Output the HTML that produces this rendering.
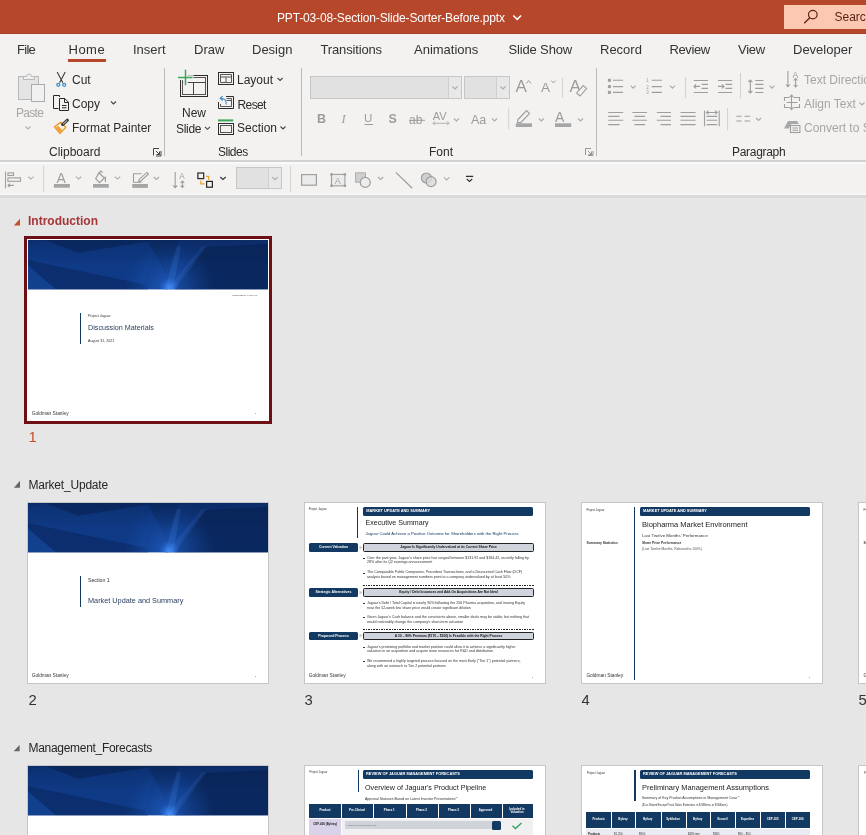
<!DOCTYPE html>
<html><head><meta charset="utf-8">
<style>
*{margin:0;padding:0;box-sizing:border-box}
html,body{width:866px;height:835px;overflow:hidden;background:#e6e6e6;font-family:"Liberation Sans",sans-serif;position:relative}
.a{position:absolute}
.t{position:absolute;white-space:nowrap;line-height:1}
#title{left:0;top:0;width:866px;height:34px;background:#b7472a}
#tabs{left:0;top:34px;width:866px;height:30px;background:#f3f2f1}
#ribbon{left:0;top:64px;width:866px;height:97px;background:#f3f2f1}
#qat{left:0;top:161px;width:866px;height:36px;background:#f3f2f1}
.tab{font-size:13px;color:#333;top:43px}
.rl{font-size:12px;color:#2b2b2b}
.dis{color:#a6a6a6}
.sep{position:absolute;width:1px;background:#bababa}
.thumb{position:absolute;width:242px;height:182px;background:#fff;border:1px solid #c6c6c6;overflow:hidden}
.sl{position:absolute;width:240px;height:180px;background:#fff;overflow:hidden}
.hb{position:absolute;height:8.5px;background:#113961;border-radius:1.5px;color:#fff;font-size:3.9px;font-weight:bold;line-height:8.5px;padding-left:3px;white-space:nowrap}
.lb{position:absolute;left:4.3px;width:48.4px;height:8.3px;margin-top:-0.3px;background:#113961;border-radius:1.5px;color:#fff;font-size:3.5px;font-weight:bold;line-height:8.3px;text-align:center;white-space:nowrap}
.gb{position:absolute;left:58.3px;width:170.5px;height:8.3px;margin-top:-0.3px;background:#d0d5dd;border:0.9px solid #222;border-radius:1.5px;color:#111;font-size:3.3px;font-weight:bold;line-height:6.5px;text-align:center;white-space:nowrap}
.bl{position:absolute;left:57.5px;font-size:3.6px;line-height:4.8px;color:#333;white-space:nowrap;padding-left:4.5px}
.bl:before{content:"";position:absolute;left:0.3px;top:2.3px;width:2.4px;height:0.8px;background:#333}
.dv{position:absolute;left:58px;width:171px;height:1px;background:repeating-linear-gradient(90deg,#222 0,#222 1.7px,transparent 1.7px,transparent 2.6px)}
.th{background:#113961}
.tt{font-size:2.9px;font-weight:bold;color:#fff;text-align:center}
</style></head><body><div style="position:absolute;left:0;top:0;width:866px;height:835px;will-change:transform">
<div id="title" class="a"></div>
<div class="a" style="left:0;top:33px;width:866px;height:1px;background:#a4401f"></div>
<div class="t" style="left:277px;top:12px;font-size:12px;letter-spacing:-0.15px;color:#fff">PPT-03-08-Section-Slide-Sorter-Before.pptx</div>

<div class="a" style="left:784px;top:5px;width:82px;height:24px;background:#fdc8b2"></div>
<div class="t" style="left:834.5px;top:11.4px;font-size:12px;color:#5a2418">Search</div>
<svg class="a" style="left:0;top:0" width="866" height="34"><path d="M513.3,15.5 L517.2,19.4 L521.1,15.5" fill="none" stroke="#fff" stroke-width="1.6"/>
<circle cx="812.8" cy="14.6" r="4.3" fill="none" stroke="#5a2418" stroke-width="1.2"/><path d="M809.8,17.8 L804.2,23.3" stroke="#5a2418" stroke-width="1.3"/></svg>

<div id="tabs" class="a"></div>
<div id="ribbon" class="a"></div>
<div id="qat" class="a"></div>
<div class="a" style="left:0;top:160px;width:866px;height:2px;background:#d2d2d2"></div>
<div class="a" style="left:0;top:162px;width:866px;height:2px;background:#f9f9f9"></div>
<div class="a" style="left:0;top:193px;width:866px;height:2px;background:#f7f7f7"></div>
<div class="a" style="left:0;top:195px;width:866px;height:2.5px;background:#dadada"></div>

<div class="t tab" style="left:17px;letter-spacing:-0.7px">File</div>
<div class="t tab" style="left:68.5px;color:#303030;letter-spacing:0.5px">Home</div>
<div class="a" style="left:68px;top:59px;width:38px;height:3px;background:#b7472a"></div>
<div class="t tab" style="left:133px">Insert</div>
<div class="t tab" style="left:194px">Draw</div>
<div class="t tab" style="left:252px">Design</div>
<div class="t tab" style="left:320.5px;letter-spacing:-0.15px">Transitions</div>
<div class="t tab" style="left:414px">Animations</div>
<div class="t tab" style="left:508.5px;letter-spacing:-0.15px">Slide Show</div>
<div class="t tab" style="left:600px">Record</div>
<div class="t tab" style="left:669.5px;letter-spacing:-0.4px">Review</div>
<div class="t tab" style="left:738px;letter-spacing:-0.3px">View</div>
<div class="t tab" style="left:793px">Developer</div>


<div class="t rl dis" style="left:16px;top:107px;letter-spacing:-0.7px">Paste</div>
<div class="t rl" style="left:72px;top:74px">Cut</div>
<div class="t rl" style="left:72px;top:98px">Copy</div>
<div class="t rl" style="left:72px;top:122px">Format Painter</div>
<div class="t rl" style="left:182px;top:107px">New</div>
<div class="t rl" style="left:176px;top:123px;letter-spacing:-0.3px">Slide</div>
<div class="t rl" style="left:237px;top:74px">Layout</div>
<div class="t rl" style="left:237.5px;top:99px;letter-spacing:-0.6px">Reset</div>
<div class="t rl" style="left:237px;top:122px">Section</div>
<div class="t rl dis" style="left:804px;top:74px">Text Direction</div>
<div class="t rl dis" style="left:804px;top:98px">Align Text</div>
<div class="t rl dis" style="left:804px;top:122px">Convert to SmartArt</div>

<!-- group labels -->
<div class="t rl" style="left:49px;top:146px">Clipboard</div>
<div class="t rl" style="left:218px;top:146px;letter-spacing:-0.5px">Slides</div>
<div class="t rl" style="left:429px;top:146px">Font</div>
<div class="t rl" style="left:732px;top:146px;letter-spacing:-0.3px">Paragraph</div>
<div class="sep" style="left:164px;top:68px;height:88px"></div>
<div class="sep" style="left:301px;top:68px;height:88px"></div>
<div class="sep" style="left:596px;top:68px;height:88px"></div>


<svg class="a" style="left:0;top:0" width="866" height="200" viewBox="0 0 866 200" font-family="Liberation Sans, sans-serif">
<defs>
<path id="chev" d="M0,0 L2.5,2.5 L5,0" fill="none" stroke-width="1.1"/>
</defs>
<!-- Paste -->
<g stroke="#b9b9b9" stroke-width="1">
<rect x="18.5" y="76.5" width="20" height="23" fill="#e4e4e4"/>
<path d="M23.5,79.5 V76.5 H26.5 A2.5,2.5 0 0 1 31.5,76.5 H34.5 V79.5 Z" fill="#efefef"/>
<rect x="31.5" y="84.5" width="13" height="17" fill="#f1f1f1" stroke="#ababab"/>
</g>
<use href="#chev" x="25.5" y="126.5" stroke="#b0b0b0"/>
<!-- Cut -->
<g stroke="#3c3c3c" stroke-width="1.1" fill="none">
<path d="M57.2,72 L62.8,82.8 M65.2,72 L59.6,82.8"/>
</g>
<g stroke="#3d8fd1" stroke-width="1.3" fill="none">
<circle cx="58.3" cy="84.8" r="1.5"/><circle cx="64.2" cy="84.8" r="1.5"/>
</g>
<!-- Copy -->
<g stroke="#262626" stroke-width="1" fill="none">
<path d="M59.5,97 V95.5 H53.5 V108.5 H58.5"/>
<path d="M59.5,98.5 H64.8 L68.5,102.3 V110.5 H59.5 Z" fill="#f3f2f1"/>
<path d="M64.5,98.5 V102.5 H68.5"/>
<path d="M62,105.5 H66.5 M62,107.8 H66.5"/>
</g>
<use href="#chev" x="111" y="101.5" stroke="#444"/>
<!-- Format painter -->
<path d="M54.3,126.9 L61,122.1 L65.8,127.3 L60,133.5 Z" fill="#fdf3e4" stroke="#eb9a34" stroke-width="1.3" stroke-linejoin="round"/>
<path d="M55.2,128 L58.2,125.8 L63.2,131 L60,133.2 Z" fill="#f2a43c"/>
<path d="M62.6,124.6 L67.4,120.2" stroke="#3c3c3c" stroke-width="3" stroke-linecap="round"/>
<path d="M63.2,124 L67,120.6" stroke="#d8d8d8" stroke-width="1"/>
<path d="M153.5,155.5 V148.5 H159 M156,151 L159.5,154.5 M156.5,154.5 H159.5 V151.5 M161,151 V156 H156" fill="none" stroke="#444" stroke-width="1"/>

<!-- New slide -->
<g stroke="#2b2b2b" stroke-width="1" fill="none">
<rect x="180.5" y="75.5" width="27" height="21"/>
<rect x="182.5" y="77.5" width="23" height="17" stroke="#555"/>
<path d="M182.5,82.5 H205.5 M193.5,82.5 V94.5" stroke="#444"/>
</g>
<path d="M177,77.5 H193.5 M185.5,69 V86" stroke="#f3f2f1" stroke-width="4.5"/><rect x="180" y="75" width="5" height="5" fill="#f3f2f1"/>
<path d="M178,77.5 H192.6 M185.5,69.8 V85.3" stroke="#3aa757" stroke-width="1.5"/>
<use href="#chev" x="205" y="126.8" stroke="#444"/>
<!-- Layout -->
<g stroke="#2b2b2b" stroke-width="1" fill="none">
<rect x="218.5" y="72.5" width="15" height="12"/>
<path d="M220.5,74.5 H231.5 V82.5 H220.5 Z M220.5,77 H231.5 M226,77 V82.5" stroke="#555"/>
</g>
<use href="#chev" x="277.6" y="78" stroke="#444"/>
<!-- Reset -->
<g stroke="#2b2b2b" stroke-width="1" fill="none">
<path d="M218.5,102 V108.5 H233.5 V96.5 H226"/>
<path d="M226.5,98.5 H231.5 V106.5 H220.5 V104 M226.5,100.5 H231.5" stroke="#555"/>
</g>
<path d="M226.2,104.5 C226.5,100 224.5,98.2 220.5,98.3 M222.6,96.1 L220.2,98.3 L222.6,100.5" stroke="#3d8fd1" stroke-width="1.2" fill="none"/>
<!-- Section -->
<rect x="218" y="119.4" width="15.2" height="2" fill="#3aa757"/>
<g stroke="#2b2b2b" stroke-width="1" fill="none">
<rect x="218.5" y="123.5" width="15" height="11"/>
<rect x="220.5" y="125.5" width="11" height="7" stroke="#555"/>
</g>
<use href="#chev" x="280.5" y="126.5" stroke="#444"/>

<!-- Font group -->
<g fill="#e1e1e1" stroke="#c6c6c6" stroke-width="1">
<rect x="310.5" y="76.5" width="151" height="22"/>
<rect x="464.5" y="76.5" width="45" height="22"/>
</g>
<path d="M448.5,77 V98 M496.5,77 V98" stroke="#cfcfcf"/>
<rect x="449" y="77" width="12" height="21" fill="#e8e8e8"/>
<rect x="497" y="77" width="12" height="21" fill="#e8e8e8"/>
<use href="#chev" x="452.5" y="86.5" stroke="#aaa"/>
<use href="#chev" x="500.5" y="86.5" stroke="#aaa"/>
<g fill="#9c9c9c">
<text x="515.5" y="91.8" font-size="17">A</text>
<text x="541" y="91.8" font-size="13.5">A</text>
<text x="569.6" y="91.8" font-size="17">A</text>
<text x="317" y="122.7" font-size="12.5" font-weight="bold">B</text>
<text x="341.5" y="122.7" font-size="12.5" font-style="italic" font-family="Liberation Serif">I</text>
<text x="364" y="121.5" font-size="11.5">U</text>
<text x="388.5" y="122.7" font-size="12.5" font-weight="bold">S</text>
<text x="409" y="123.7" font-size="12">ab</text>
<text x="432.8" y="119.8" font-size="11">AV</text>
<text x="471" y="123.7" font-size="12.5">Aa</text>
<text x="555" y="121.5" font-size="14">A</text>
</g>
<path d="M526.3,83.5 L528.6,80.6 L531,83.5 M551.3,80.6 L553.4,83 L555.5,80.6" fill="none" stroke="#9c9c9c" stroke-width="1"/>
<path d="M562.5,78 V97.5" stroke="#d0d0d0"/>
<path d="M576.6,93 L583.2,85.6 L586.6,88.6 L580,96 Z" fill="#f3f2f1" stroke="#9c9c9c" stroke-width="1.1"/>
<path d="M364.5,124.5 H373" stroke="#9c9c9c"/>
<path d="M409,120.3 H425" stroke="#9c9c9c"/>
<path d="M433,123.3 H449 M435,121.3 L433,123.3 L435,125.3 M447,121.3 L449,123.3 L447,125.3" stroke="#a8a8a8" fill="none" stroke-width="0.9"/>
<use href="#chev" x="454" y="118.5" stroke="#aaa"/>
<use href="#chev" x="492" y="118.5" stroke="#aaa"/>
<path d="M508.7,108.5 V129.7" stroke="#d0d0d0"/>
<path d="M518,119.5 L526.5,110.5 L529.5,113.5 L521,122.5 L517.5,122.5 Z" fill="none" stroke="#9c9c9c" stroke-width="1.1"/>
<rect x="515.8" y="123.3" width="16.2" height="3.7" fill="#a6a6a6"/>
<rect x="555" y="123.3" width="16.2" height="3.7" fill="#a6a6a6"/>
<use href="#chev" x="538.8" y="118.5" stroke="#aaa"/>
<use href="#chev" x="578" y="118.5" stroke="#aaa"/>
<path d="M585.5,155 V148.5 H591 M588,151 L591.5,154.5 M588.5,154.5 H591.5 V151.5 M593,151 V155.5 H588" fill="none" stroke="#8a8a8a" stroke-width="0.9"/>
</svg>


<svg class="a" style="left:0;top:0" width="866" height="200" viewBox="0 0 866 200" font-family="Liberation Sans, sans-serif">
<defs>
<path id="chev2" d="M0,0 L2.5,2.5 L5,0" fill="none" stroke-width="1.1"/>
</defs>
<g stroke="#9e9e9e" stroke-width="1.1" fill="none">
<!-- bullets -->
<path d="M612.9,80.3 H623.1 M612.9,86.6 H623.1 M612.9,92.4 H623.1"/>
<path d="M651.7,80.3 H661.9 M651.7,86.6 H661.9 M651.7,92.4 H661.9"/>
<!-- indents -->
<path d="M693.8,80.5 H708 M701.5,84.4 H708 M701.5,88.4 H708 M693.8,92.5 H708"/>
<path d="M694,86.4 H700 M696,84.4 L694,86.4 L696,88.4"/>
<path d="M718,80.5 H732.2 M725.5,84.4 H732.2 M725.5,88.4 H732.2 M718,92.5 H732.2"/>
<path d="M718,86.4 H724 M722,84.4 L724,86.4 L722,88.4"/>
<!-- line spacing -->
<path d="M750.3,80 V93 M748.3,82 L750.3,80 L752.3,82 M748.3,91 L750.3,93 L752.3,91"/>
<path d="M755.2,80.5 H763.4 M755.2,84.4 H763.4 M755.2,88.4 H763.4 M755.2,92.5 H763.4"/>
<!-- align -->
<path d="M608.2,112.5 H623.2 M608.2,116.4 H619.6 M608.2,120.3 H623.2 M608.2,124.6 H619.6"/>
<path d="M632.4,112.5 H647.1 M634.4,116.4 H645.1 M632.4,120.3 H647.1 M634.4,124.6 H645.1"/>
<path d="M656.9,112.5 H671 M660.5,116.4 H671 M656.9,120.3 H671 M660.5,124.6 H671"/>
<path d="M680.5,112.5 H695.6 M680.5,116.4 H695.6 M680.5,120.3 H695.6 M680.5,124.6 H695.6"/>
<path d="M704.5,110.5 V126.2 M719.2,110.5 V126.2 M706.5,116.4 H717.2 M706.5,120.3 H717.2 M706.5,124.6 H717.2 M706.5,112.5 H717.2 M708.5,110.7 L706.5,112.5 L708.5,114.3 M715.2,110.7 L717.2,112.5 L715.2,114.3"/>
<path d="M736.4,116.3 H741.5 M744.5,116.3 H750.2 M736.4,121 H741.5 M744.5,121 H750.2"/>
</g>
<g fill="#9e9e9e">
<rect x="607.9" y="78.8" width="3" height="3"/><rect x="607.9" y="85.1" width="3" height="3"/><rect x="607.9" y="90.9" width="3" height="3"/>
<text x="646.2" y="82.3" font-size="4.5">1</text><text x="646.2" y="88.6" font-size="4.5">2</text><text x="646.2" y="94.4" font-size="4.5">3</text>
</g>
<use href="#chev2" x="630.7" y="85.7" stroke="#aaa"/>
<use href="#chev2" x="669.9" y="85.7" stroke="#aaa"/>
<use href="#chev2" x="769.5" y="85.7" stroke="#aaa"/>
<use href="#chev2" x="756" y="118" stroke="#aaa"/>
<use href="#chev2" x="859.5" y="102.5" stroke="#aaa"/>
<path d="M685.6,77 V98 M740.5,73 V98 M727.6,108 V130" stroke="#d0d0d0"/>
<!-- text direction -->
<g stroke="#9e9e9e" stroke-width="1.1" fill="none">
<path d="M787.9,71 V86.5 M785.9,84.5 L787.9,86.7 L789.9,84.5"/>
<path d="M795.6,78.5 V87 M793.8,85 L795.6,87 L797.4,85 M793.8,80.5 L795.6,78.5 L797.4,80.5"/>
<path d="M784.5,101 V97.5 H789.5 M793.5,97.5 H799.5 V101 M784.5,104 V107.5 H789.5 M793.5,107.5 H799.5 V104 M786.5,102.5 H797.5 M791.5,95 V109.5 M789.7,96.8 L791.5,95 L793.3,96.8 M789.7,107.7 L791.5,109.5 L793.3,107.7"/>
<rect x="790.5" y="125.5" width="9.4" height="7"/>
<path d="M792.5,128 H798 M792.5,130.3 H798"/>
</g>
<text x="792.5" y="77.6" font-size="8.6" fill="#9e9e9e">A</text>
<path d="M784,128.6 L788,121 H797 L799,124 H791 L789,128.6 Z" fill="#a8a8a8"/>
</svg>


<svg class="a" style="left:0;top:0" width="866" height="200" viewBox="0 0 866 200" font-family="Liberation Sans, sans-serif">
<defs>
<path id="chev3" d="M0,0 L2.7,2.5 L5.4,0" fill="none" stroke-width="1.1"/>
</defs>
<g stroke="#9e9e9e" stroke-width="1.1" fill="none">
<path d="M5.5,171.5 V188.2"/>
<rect x="7.9" y="172.9" width="5.6" height="2.6"/>
<rect x="7.9" y="177.9" width="12.6" height="3.4"/>
<path d="M8,185.4 H13.8 M9.8,183.6 L8,185.4 L9.8,187.2"/>
</g>
<use href="#chev3" x="28.2" y="176.6" stroke="#aaa"/>
<path d="M43.6,166 V191.6 M290.5,166 V191.6" stroke="#d0d0d0"/>
<text x="56.6" y="182.6" font-size="14" fill="#9e9e9e">A</text>
<rect x="53.9" y="184" width="16" height="3.7" fill="#a6a6a6"/>
<use href="#chev3" x="75.9" y="176.6" stroke="#aaa"/>
<path d="M99,172.8 L104.3,178 L99.6,182.6 L95.7,178.6 Z M98,174 L101,171 L102.5,172.5 M105.4,176.5 V182" fill="none" stroke="#9e9e9e" stroke-width="1.2"/>
<rect x="93" y="184" width="15.8" height="3.7" fill="#a6a6a6"/>
<use href="#chev3" x="114.8" y="176.6" stroke="#aaa"/>
<path d="M141.6,173.8 H133.5 V182.2 H141.6 M138.4,182 L139.3,179.2 L147,172.4 L148.5,174 L140.8,181 Z" fill="none" stroke="#9e9e9e" stroke-width="1.1"/>
<rect x="132.2" y="184" width="15.7" height="3.9" fill="#a6a6a6"/>
<use href="#chev3" x="153.7" y="177" stroke="#aaa"/>
<g stroke="#9e9e9e" stroke-width="1.1" fill="none">
<path d="M175.2,172 V187.5 M173.2,185.5 L175.2,187.6 L177.2,185.5"/>
<path d="M182.4,181 V187.5 M180.6,185.7 L182.4,187.5 L184.2,185.7 M180.6,182.8 L182.4,181 L184.2,182.8"/>
</g>
<text x="179.2" y="179.3" font-size="8.2" fill="#9e9e9e">A</text>
<g stroke="#262626" stroke-width="1.2" fill="none">
<rect x="197.9" y="173" width="5.8" height="5.6"/>
<rect x="206.6" y="181.4" width="5.8" height="5.8"/>
</g>
<path d="M206,176.4 H208.6 V180 M200.8,180.5 V183.9 H204.5" stroke="#f0a030" stroke-width="1.2" fill="none"/>
<use href="#chev3" x="220.3" y="177" stroke="#333" stroke-width="1.4"/>
<rect x="236.5" y="167.5" width="45" height="21" fill="#e1e1e1" stroke="#c6c6c6"/>
<rect x="269" y="168" width="12" height="20" fill="#e8e8e8"/>
<path d="M268.5,168 V188" stroke="#cfcfcf"/>
<use href="#chev3" x="272.3" y="177.2" stroke="#aaa"/>
<rect x="301.6" y="174.6" width="14.8" height="10.6" fill="#ebebeb" stroke="#9e9e9e" stroke-width="1.2"/>
<rect x="331.5" y="174.4" width="13.4" height="11.4" fill="#ebebeb" stroke="#9e9e9e" stroke-width="1.1"/>
<g fill="#9e9e9e"><rect x="330.3" y="173.2" width="2.4" height="2.4"/><rect x="343.7" y="173.2" width="2.4" height="2.4"/><rect x="330.3" y="184.6" width="2.4" height="2.4"/><rect x="343.7" y="184.6" width="2.4" height="2.4"/></g>
<text x="334.7" y="183.6" font-size="9" fill="#a8a8a8">A</text>
<rect x="355.6" y="172.8" width="9.8" height="9.4" fill="#cfcfcf" stroke="#a8a8a8" stroke-width="0.9"/>
<circle cx="365.3" cy="182.4" r="5" fill="#ececec" stroke="#9e9e9e" stroke-width="1.2"/>
<use href="#chev3" x="377.9" y="177" stroke="#aaa"/>
<path d="M395.9,172.4 L412.2,188.2" stroke="#9e9e9e" stroke-width="1.3"/>
<circle cx="426.4" cy="178" r="5" fill="#cfcfcf" stroke="#9e9e9e" stroke-width="1.2"/>
<circle cx="431.1" cy="181.6" r="5" fill="#d9d9d9" fill-opacity="0.8" stroke="#9e9e9e" stroke-width="1.2"/>
<use href="#chev3" x="444" y="177.4" stroke="#aaa"/>
<path d="M465.9,176.4 H473.2" stroke="#333" stroke-width="1.3"/>
<use href="#chev3" x="466.8" y="179" stroke="#333" stroke-width="1.5"/>
</svg>

<!-- sorter -->
<svg width="0" height="0" style="position:absolute">
<defs>
<radialGradient id="glow" cx="141" cy="47" r="45" gradientUnits="userSpaceOnUse">
<stop offset="0" stop-color="#3f8cff" stop-opacity="0.95"/>
<stop offset="0.22" stop-color="#2468d8" stop-opacity="0.5"/>
<stop offset="1" stop-color="#1a5bc0" stop-opacity="0"/>
</radialGradient>
<linearGradient id="vig" x1="0" y1="0" x2="0" y2="1">
<stop offset="0" stop-color="#061a40" stop-opacity="0.3"/>
<stop offset="0.5" stop-color="#061a40" stop-opacity="0.05"/>
<stop offset="1" stop-color="#061a40" stop-opacity="0"/>
</linearGradient>
<symbol id="hdr" viewBox="0 0 240 49">
<rect width="240" height="49" fill="#0e357d"/>
<polygon points="0,5 130,0 140,49 116,46 0,26" fill="#0e3780"/>
<polygon points="0,5 17,0 130,0 116,44 0,20" fill="#0f3b88"/>
<polygon points="17,0 130,0 50,12.5" fill="#0b2c6a"/>
<polygon points="0,20 116,44 120,49 28,49 0,25" fill="#0c2f70"/>
<polygon points="0,25 28,49 0,49" fill="#12418f"/>
<polygon points="119,0 151,0 138,33" fill="#0c2f6e"/>
<polygon points="151,0 240,0 240,4 177,7" fill="#0e3478"/>
<polygon points="177,7 240,4 240,49 147,49 155,33" fill="#0a2860"/>
<rect width="240" height="49" fill="url(#glow)"/>
<polygon points="137,49 149,6 153,6 145,49" fill="#5aa0ff" opacity="0.16"/>
<polygon points="139,49 174,6 179,6 147,49" fill="#5aa0ff" opacity="0.12"/>
<rect width="240" height="49" fill="url(#vig)"/>
</symbol>
</defs>
</svg>

<div class="t" style="left:28px;top:215px;font-size:12px;font-weight:bold;color:#a4373a">Introduction</div>
<svg class="a" style="left:13px;top:218px" width="8" height="8"><polygon points="7,0.7 7,7.4 0.8,7.4" fill="#c8502f"/></svg>
<div class="a" style="left:24px;top:236px;width:248px;height:188px;border:3px solid #6e0f14;background:#fff"></div>
<div class="a sl" style="left:28px;top:240px">
 <svg class="a" style="left:0;top:0" width="240" height="49.6" viewBox="0 0 240 49" preserveAspectRatio="none"><use href="#hdr" width="240" height="49"/></svg>
 <div class="t" style="left:204px;top:54px;font-size:2.3px;color:#555">CONFIDENTIAL DRAFT</div>
 <div class="a" style="left:52px;top:73px;width:1.4px;height:31px;background:#113961"></div>
 <div class="t" style="left:60px;top:74.5px;font-size:3.5px;color:#333">Project Jaguar</div>
 <div class="t" style="left:60px;top:84.3px;font-size:7.2px;color:#2a3d5e">Discussion Materials</div>
 <div class="t" style="left:60px;top:100.3px;font-size:3.6px;color:#333">August 31, 2021</div>
 <div class="t" style="left:3.8px;top:171.5px;font-size:4.8px;color:#333">Goldman Stanley</div>
 <div class="a" style="left:227px;top:173px;width:1px;height:1.2px;background:#aaa"></div>
</div>
<div class="t" style="left:28.5px;top:429.8px;font-size:14.8px;color:#c4512f">1</div>

<div class="t" style="left:28.5px;top:478.5px;font-size:12px;letter-spacing:-0.2px;color:#262626">Market_Update</div>
<svg class="a" style="left:13px;top:480px" width="8" height="8"><polygon points="7,0.8 7,7.7 0.9,7.7" fill="#666"/></svg>

<div class="thumb" style="left:27px;top:502px">
 <svg class="a" style="left:0;top:0" width="240" height="49.6" viewBox="0 0 240 49" preserveAspectRatio="none"><use href="#hdr" width="240" height="49"/></svg>
 <div class="a" style="left:52px;top:73px;width:1.4px;height:31px;background:#113961"></div>
 <div class="t" style="left:60px;top:75.3px;font-size:5.2px;color:#333">Section 1</div>
 <div class="t" style="left:60px;top:94px;font-size:7.3px;color:#2a3d5e">Market Update and Summary</div>
 <div class="t" style="left:3.8px;top:170.5px;font-size:4.8px;color:#333">Goldman Stanley</div>
 <div class="a" style="left:227px;top:173px;width:1px;height:1.2px;background:#aaa"></div>
</div>

<div class="thumb" style="left:304px;top:502px">
 <div class="t" style="left:3.7px;top:5.4px;font-size:2.8px;color:#333">Project Jaguar</div>
 <div class="a" style="left:52px;top:4px;width:1.3px;height:31px;background:#113961"></div>
 <div class="hb" style="left:58.3px;top:4.1px;width:169.3px">MARKET UPDATE AND SUMMARY</div>
 <div class="t" style="left:60.5px;top:16.5px;font-size:7.1px;color:#222">Executive Summary</div>
 <div class="t" style="left:60.5px;top:29.2px;font-size:4.2px;color:#113961">Jaguar Could Achieve a Positive Outcome for Shareholders with the Right Process</div>

 <div class="lb" style="top:40.6px">Current Valuation</div>
 <svg class="a" style="left:53.5px;top:42.1px" width="4" height="5"><polygon points="0.5,0.5 3.5,2.5 0.5,4.5" fill="#c8c8c8"/></svg>
 <div class="gb" style="top:40.6px">Jaguar Is Significantly Undervalued at its Current Share Price</div>
 <div class="bl" style="top:52.6px">Over the past year, Jaguar's share price has ranged between $131.92 and $184.42, recently falling by<br>28% after its Q2 earnings announcement</div>
 <div class="bl" style="top:67.3px">The Comparable Public Companies, Precedent Transactions, and a Discounted Cash Flow (DCF)<br>analysis based on management numbers point to a company undervalued by at least 50%</div>
 <div class="dv" style="top:82.1px"></div>

 <div class="lb" style="top:85.5px">Strategic Alternatives</div>
 <svg class="a" style="left:53.5px;top:87.0px" width="4" height="5"><polygon points="0.5,0.5 3.5,2.5 0.5,4.5" fill="#c8c8c8"/></svg>
 <div class="gb" style="top:85.5px">Equity / Debt Issuances and Add-On Acquisitions Are Not Ideal</div>
 <div class="bl" style="top:97.9px">Jaguar's Debt / Total Capital is nearly 90% following the 256 Pharma acquisition, and issuing Equity<br>near the 52-week low share price would create significant dilution</div>
 <div class="bl" style="top:112.2px">Given Jaguar's Cash balance and the constraints above, smaller deals may be viable, but nothing that<br>would noticeably change the company's short-term valuation</div>
 <div class="dv" style="top:125.8px"></div>

 <div class="lb" style="top:128.9px">Proposed Process</div>
 <svg class="a" style="left:53.5px;top:130.4px" width="4" height="5"><polygon points="0.5,0.5 3.5,2.5 0.5,4.5" fill="#c8c8c8"/></svg>
 <div class="gb" style="top:128.9px">A 30 – 90% Premium ($170 – $300) Is Feasible with the Right Process</div>
 <div class="bl" style="top:141.5px">Jaguar's promising portfolio and market position could allow it to achieve a significantly higher<br>valuation in an acquisition and acquire more resources for R&amp;D and distribution</div>
 <div class="bl" style="top:156.2px">We recommend a highly targeted process focused on the most likely ("Tier 1") potential partners,<br>along with an outreach to Tier 2 potential partners</div>

 <div class="t" style="left:3.8px;top:171px;font-size:4.8px;color:#333">Goldman Stanley</div>
 <div class="a" style="left:227px;top:174px;width:1px;height:1.2px;background:#aaa"></div>
</div>

<div class="thumb" style="left:581px;top:502px">
 <div class="t" style="left:4.4px;top:5.6px;font-size:2.8px;color:#333">Project Jaguar</div>
 <div class="t" style="left:4.4px;top:38.8px;font-size:3.4px;font-weight:bold;color:#333">Summary Statistics</div>
 <div class="a" style="left:52.3px;top:4px;width:1.1px;height:172.7px;background:#113961"></div>
 <div class="hb" style="left:58px;top:4.1px;width:169.9px">MARKET UPDATE AND SUMMARY</div>
 <div class="t" style="left:60px;top:18px;font-size:7.5px;color:#222">Biopharma Market Environment</div>
 <div class="t" style="left:60px;top:30.9px;font-size:4.4px;color:#333">Last Twelve Months' Performance</div>
 <div class="t" style="left:60px;top:38.7px;font-size:3.3px;font-weight:bold;color:#333">Share Price Performance</div>
 <div class="t" style="left:60px;top:45.2px;font-size:3.33px;color:#555">(Last Twelve Months, Rebased to 100%)</div>
 <div class="t" style="left:4.4px;top:171px;font-size:4.8px;color:#333">Goldman Stanley</div>
 <div class="a" style="left:227px;top:174px;width:1px;height:1.2px;background:#aaa"></div>
</div>

<div class="thumb" style="left:858px;top:502px">
 <div class="t" style="left:4.4px;top:5.6px;font-size:2.8px;color:#333">Project Jaguar</div>
 <div class="t" style="left:4.4px;top:38.8px;font-size:3.4px;font-weight:bold;color:#333">Summary Statistics</div>
 <div class="t" style="left:4.4px;top:171px;font-size:4.8px;color:#333">Goldman Stanley</div>
</div>

<div class="t" style="left:28.5px;top:692.6px;font-size:14.8px;color:#333">2</div>
<div class="t" style="left:304.5px;top:692.6px;font-size:14.8px;color:#333">3</div>
<div class="t" style="left:581.5px;top:692.6px;font-size:14.8px;color:#333">4</div>
<div class="t" style="left:858.5px;top:692.6px;font-size:14.8px;color:#333">5</div>

<div class="t" style="left:28.5px;top:741.5px;font-size:12px;letter-spacing:-0.3px;color:#262626">Management_Forecasts</div>
<svg class="a" style="left:13px;top:744px" width="8" height="8"><polygon points="6.6,0.9 6.6,7.2 0.7,7.2" fill="#666"/></svg>

<div class="thumb" style="left:27px;top:765px">
 <svg class="a" style="left:0;top:0" width="240" height="49.6" viewBox="0 0 240 49" preserveAspectRatio="none"><use href="#hdr" width="240" height="49"/></svg>
</div>

<div class="thumb" style="left:304px;top:765px">
 <div class="t" style="left:4.4px;top:5.4px;font-size:2.8px;color:#333">Project Jaguar</div>
 <div class="a" style="left:52.6px;top:4px;width:1.3px;height:22px;background:#113961"></div>
 <div class="hb" style="left:58px;top:4.1px;width:169.8px">REVIEW OF JAGUAR MANAGEMENT FORECASTS</div>
 <div class="t" style="left:60px;top:18.3px;font-size:7.2px;color:#222">Overview of Jaguar's Product Pipeline</div>
 <div class="t" style="left:60px;top:29.8px;font-size:3.5px;color:#333">Approval Statuses Based on Latest Investor Presentations<sup style="font-size:2px">(1)</sup></div>
 <div class="a th" style="left:4.1px;top:37.6px;width:223.7px;height:14.4px"></div>
 <div class="t tt" style="left:4px;width:32px;top:43.3px">Product</div>
 <div class="t tt" style="left:36px;width:32px;top:43.3px">Pre-Clinical</div>
 <div class="t tt" style="left:68px;width:32.5px;top:43.3px">Phase 1</div>
 <div class="t tt" style="left:100.5px;width:32px;top:43.3px">Phase 2</div>
 <div class="t tt" style="left:132.5px;width:32px;top:43.3px">Phase 3</div>
 <div class="t tt" style="left:164.5px;width:32px;top:43.3px">Approved</div>
 <div class="t tt" style="left:196.5px;width:31px;top:41.5px;line-height:3.2px">Included in<br>Valuation</div>
 <div class="a" style="left:36px;top:37.6px;width:0.7px;height:14.4px;background:#fff"></div>
 <div class="a" style="left:68px;top:37.6px;width:0.7px;height:14.4px;background:#fff"></div>
 <div class="a" style="left:100.5px;top:37.6px;width:0.7px;height:14.4px;background:#fff"></div>
 <div class="a" style="left:132.5px;top:37.6px;width:0.7px;height:14.4px;background:#fff"></div>
 <div class="a" style="left:164.5px;top:37.6px;width:0.7px;height:14.4px;background:#fff"></div>
 <div class="a" style="left:196.5px;top:37.6px;width:0.7px;height:14.4px;background:#fff"></div>
 <div class="a" style="left:4.1px;top:52.7px;width:32px;height:20px;background:#d9d2e9"></div>
 <div class="t" style="left:4.1px;width:32px;top:56.5px;font-size:2.9px;font-weight:bold;color:#222;text-align:center">CEP-406 (Bylvay)</div>
 <div class="a" style="left:36.7px;top:52.7px;width:191px;height:20px;background:#f0f0f0"></div>
 <div class="a" style="left:40.3px;top:55.3px;width:155px;height:8.1px;background:#d0d4da;border-radius:1px"></div>
 <div class="t" style="left:42.5px;top:58px;font-size:2.2px;color:#666">Marketed product (sold in US)</div>
 <div class="a" style="left:186.5px;top:55px;width:9px;height:8.5px;background:#113961;border-radius:1.5px"></div>
 <svg class="a" style="left:206px;top:56px" width="12" height="8"><path d="M1.5,3.8 L4.4,6.6 L10.5,1" fill="none" stroke="#2aa05a" stroke-width="1.3"/></svg>
</div>

<div class="thumb" style="left:581px;top:765px">
 <div class="t" style="left:5px;top:5.6px;font-size:2.8px;color:#333">Project Jaguar</div>
 <div class="a" style="left:52.3px;top:4px;width:1.3px;height:31.3px;background:#113961"></div>
 <div class="hb" style="left:58px;top:4.1px;width:170px">REVIEW OF JAGUAR MANAGEMENT FORECASTS</div>
 <div class="t" style="left:60px;top:17.6px;font-size:7.45px;color:#222">Preliminary Management Assumptions</div>
 <div class="t" style="left:60px;top:29.4px;font-size:3.55px;color:#333">Summary of Key Product Assumptions in Management Case<sup style="font-size:2px">(1)</sup></div>
 <div class="t" style="left:60px;top:37.8px;font-size:2.85px;color:#333">($ as Stated Except Peak Sales Estimates in $ Millions or $ Billions)</div>
 <div class="a th" style="left:4.4px;top:45.5px;width:223.6px;height:16.4px"></div>
 <div class="t tt" style="left:4.4px;width:24.6px;top:52.3px">Products</div>
 <div class="t tt" style="left:29px;width:24px;top:52.3px">Bylvay</div>
 <div class="t tt" style="left:53px;width:25.6px;top:52.3px">Bylvay</div>
 <div class="t tt" style="left:78.6px;width:24.9px;top:52.3px">Sybilation</div>
 <div class="t tt" style="left:103.5px;width:24.5px;top:52.3px">Bylvay</div>
 <div class="t tt" style="left:128px;width:25px;top:52.3px">Exoveil</div>
 <div class="t tt" style="left:153px;width:25px;top:52.3px">Exparlina</div>
 <div class="t tt" style="left:178px;width:25.3px;top:52.3px">CEP-305</div>
 <div class="t tt" style="left:203.3px;width:24.7px;top:52.3px">CEP-306</div>
 <div class="a" style="left:29px;top:45.5px;width:0.7px;height:16.4px;background:#fff"></div>
 <div class="a" style="left:53px;top:45.5px;width:0.7px;height:16.4px;background:#fff"></div>
 <div class="a" style="left:78.6px;top:45.5px;width:0.7px;height:16.4px;background:#fff"></div>
 <div class="a" style="left:103.5px;top:45.5px;width:0.7px;height:16.4px;background:#fff"></div>
 <div class="a" style="left:128px;top:45.5px;width:0.7px;height:16.4px;background:#fff"></div>
 <div class="a" style="left:153px;top:45.5px;width:0.7px;height:16.4px;background:#fff"></div>
 <div class="a" style="left:178px;top:45.5px;width:0.7px;height:16.4px;background:#fff"></div>
 <div class="a" style="left:203.3px;top:45.5px;width:0.7px;height:16.4px;background:#fff"></div>
 <div class="a" style="left:4.4px;top:62.5px;width:223.6px;height:10px;background:#e9ecf2"></div>
 <div class="t" style="left:6px;top:66.5px;font-size:2.8px;font-weight:bold;color:#222">Products</div>
 <div class="t" style="left:32px;top:66.5px;font-size:2.8px;color:#333">$1,250</div>
 <div class="t" style="left:57px;top:66.5px;font-size:2.8px;color:#333">$950</div>
 <div class="t" style="left:106px;top:66.5px;font-size:2.8px;color:#333">$480 mm</div>
 <div class="t" style="left:131px;top:66.5px;font-size:2.8px;color:#333">$380</div>
 <div class="t" style="left:156px;top:66.5px;font-size:2.8px;color:#333">$90 – $50</div>
</div>

<div class="thumb" style="left:858px;top:765px">
 <div class="t" style="left:5px;top:5.6px;font-size:2.8px;color:#333">Project Jaguar</div>
</div>
</div></body></html>
